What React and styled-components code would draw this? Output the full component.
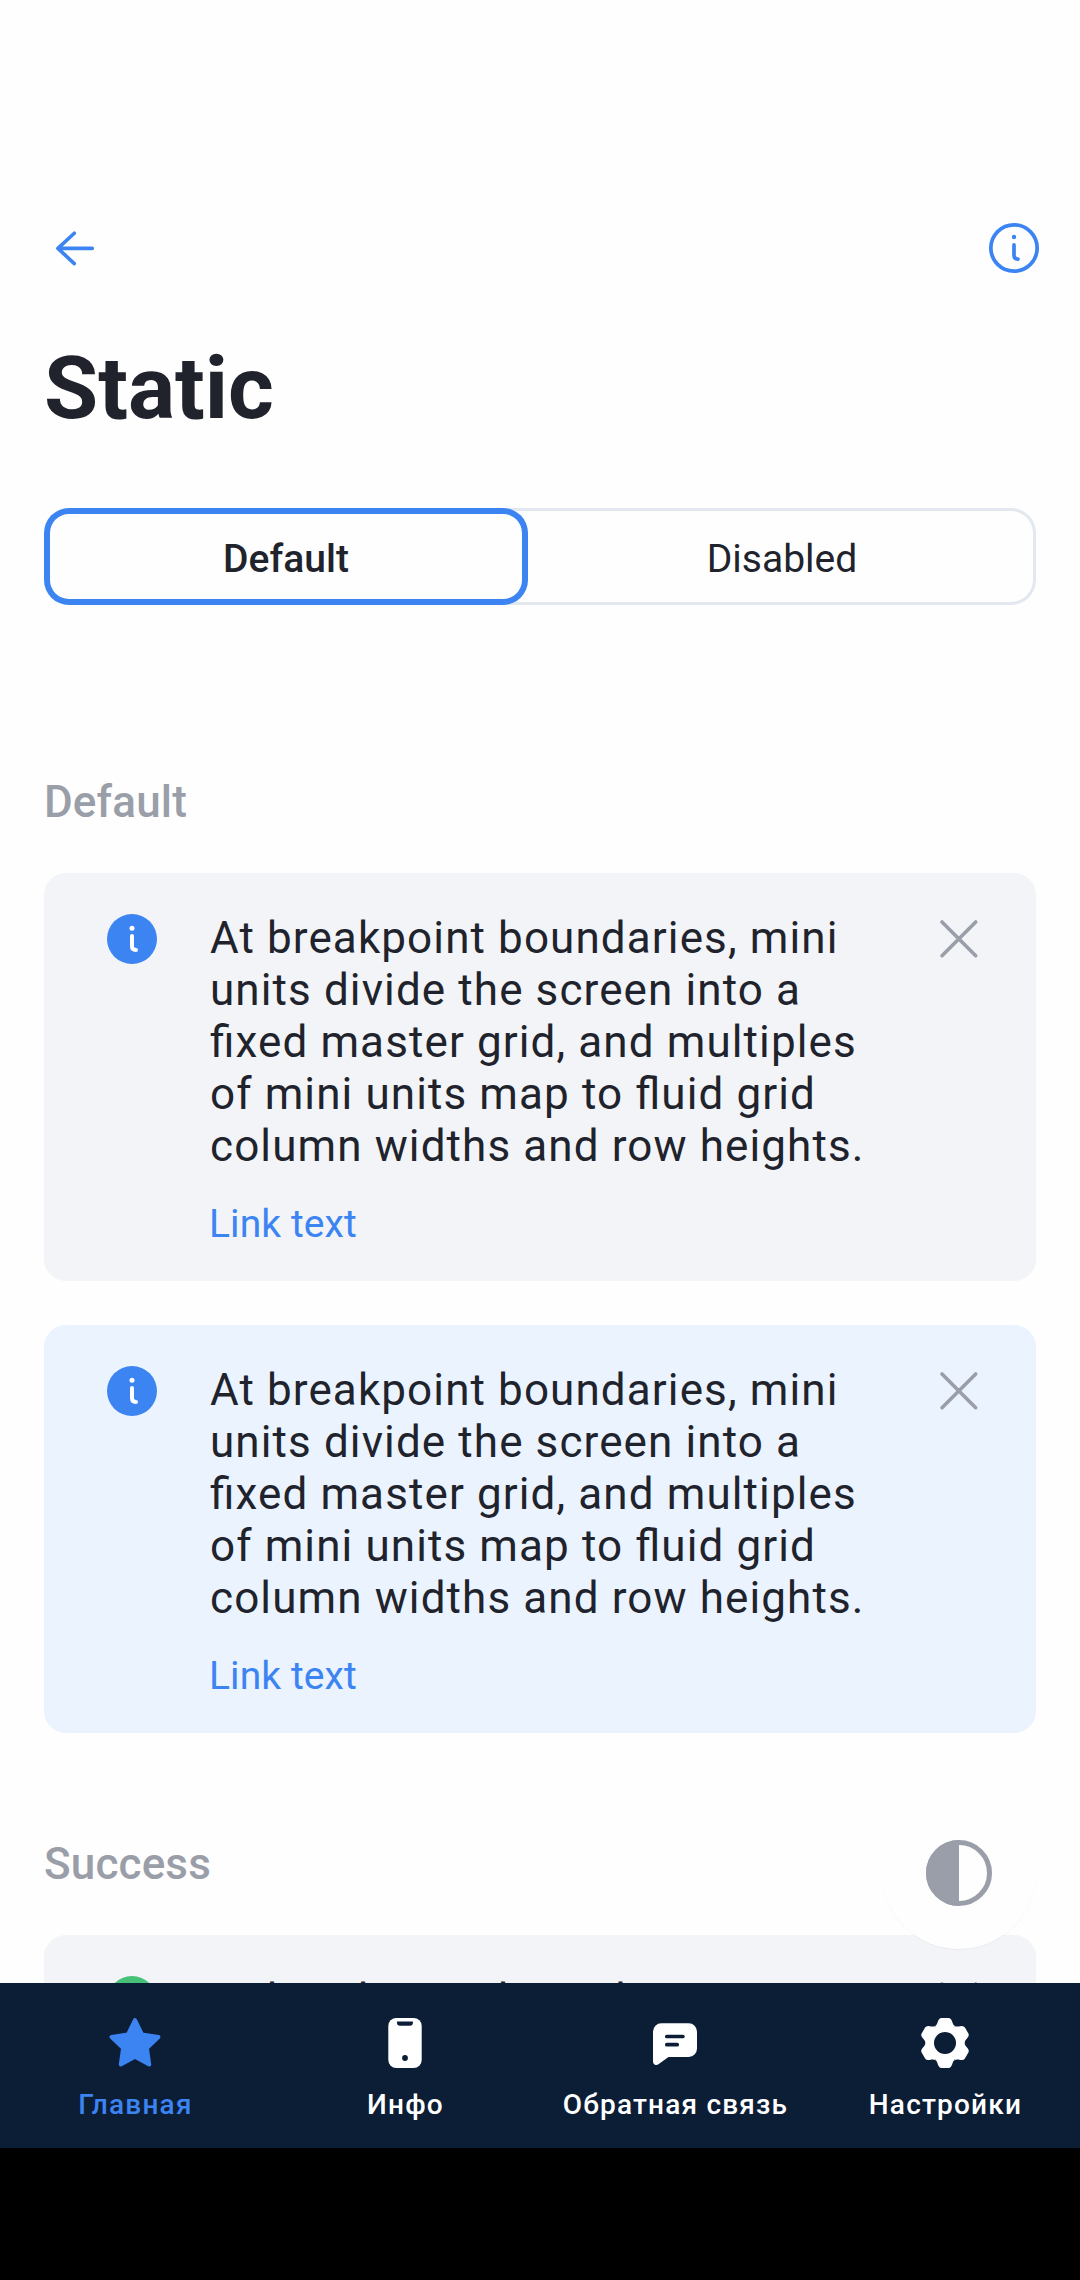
import React from "react";
import styled, { createGlobalStyle, css } from "styled-components";

const color = {
  page: "#fefefe",
  text: "#20232c",
  blue: "#3b84f2",
  gray: "#9a9ea9",
  line: "#e3e7ef",
  green: "#45c178",
  navy: "#0c1d36",
};

const Global = createGlobalStyle`
  * { box-sizing: border-box; }
  body { margin: 0; background: ${color.page}; font-family: Roboto, "Open Sans", sans-serif; color: ${color.text}; }
  button { font: inherit; color: inherit; background: none; border: 0; padding: 0; }
  h1, h2, p { margin: 0; }
  svg { display: block; }
`;

const Screen = styled.div`
  position: relative;
  display: flex;
  flex-direction: column;
  width: 1080px;
  height: 2280px;
  overflow: hidden;
  background: ${color.page};
`;

const Content = styled.main`
  display: flex;
  flex-direction: column;
  flex: 1;
  min-height: 0;
  overflow: hidden;
  padding: 0 44px;
`;

const TopBar = styled.header`
  display: flex;
  flex: none;
  justify-content: space-between;
  align-items: center;
  height: 66px;
  margin: 215px -11px 0 -2px;
`;

const IconButton = styled.button`
  width: 66px;
  height: 66px;
`;

const Title = styled.h1`
  flex: none;
  margin-top: 55px;
  font-size: 88px;
  line-height: 104px;
  font-weight: 700;
  height: 104px;
`;

const Segments = styled.div`
  flex: none;
  display: flex;
  height: 97px;
  margin-top: 68px;
  border-radius: 25px;
  box-shadow: inset 0 0 0 3px ${color.line};
`;

const Segment = styled.button`
  flex: ${(p) => (p.$active ? "0 0 484px" : "1")};
  padding-top: 4px;
  font-size: 39px;
  line-height: 46px;
  border-radius: 25px;
  font-weight: ${(p) => (p.$active ? 500 : 400)};
  ${(p) => p.$active && css`background: ${color.page}; box-shadow: inset 0 0 0 6px ${color.blue};`}
`;

const SectionTitle = styled.h2`
  flex: none;
  margin: ${(p) => p.$gap}px 0 1px;
  height: 52px;
  font-size: 44px;
  line-height: 52px;
  font-weight: 500;
  letter-spacing: 0.15px;
  color: ${color.gray};
`;

const Card = styled.article`
  flex: none;
  display: flex;
  height: 408px;
  margin-top: 44px;
  padding: 33px 44px 0 55px;
  border-radius: 22px;
  background: ${(p) => p.$bg};
`;

const StatusIcon = styled.div`
  width: 66px;
  height: 66px;
  margin-right: 45px;
`;

const CardBody = styled.div`
  display: flex;
  flex-direction: column;
  align-items: flex-start;
  flex: 1;
`;

const Message = styled.p`
  padding-top: 6px;
  font-size: 44px;
  line-height: 52px;
  letter-spacing: 1.11px;
  white-space: pre;
  font-feature-settings: "liga" 1;
`;

const Link = styled.a`
  margin: 29px 0 0 -1px;
  font-size: 39px;
  line-height: 46px;
  letter-spacing: 0.1px;
  color: ${color.blue};
`;

const ThemeButton = styled.button`
  position: absolute;
  left: 882px;
  top: 1795px;
  width: 154px;
  height: 154px;
  padding-top: 2px;
  display: grid;
  place-items: center;
  border-radius: 50%;
  background: ${color.page};
  box-shadow: 0 1px 1px rgba(0, 0, 0, 0.04);
`;

const TabBar = styled.nav`
  position: relative;
  flex: none;
  display: grid;
  grid-template-columns: repeat(4, 1fr);
  height: 165px;
  background: ${color.navy};
`;

const Tab = styled.button`
  display: flex;
  flex-direction: column;
  align-items: center;
  padding-top: 26px;
  gap: 13px;
  color: ${(p) => (p.$active ? color.blue : "#fff")};
`;

const TabLabel = styled.span`
  padding-left: 1px;
  font-size: 28px;
  line-height: 33px;
  font-weight: 500;
  letter-spacing: 1.2px;
  white-space: nowrap;
`;

const SystemBar = styled.div`
  flex: none;
  height: 132px;
  background: #000;
`;

const BackIcon = () => (
  <svg width="66" height="66" viewBox="0 0 66 66" fill="none" stroke={color.blue} strokeWidth="3.6" strokeLinecap="round" strokeLinejoin="round">
    <path d="M50.300 33.400H15.900M32.300 18.200L15.900 33.400L32.300 48.600" />
  </svg>
);

const InfoIcon = () => (
  <svg width="66" height="66" viewBox="0 0 66 66" fill="none" stroke={color.blue} strokeWidth="3.7" strokeLinecap="round">
    <circle cx="33" cy="33" r="23.150" />
    <circle cx="33" cy="22" r="2.200" fill={color.blue} stroke="none" />
    <path d="M33 29.800V40.500Q33 44 37 44.200" />
  </svg>
);

const InfoBadge = ({ fill }) => (
  <svg width="66" height="66" viewBox="0 0 66 66">
    <circle cx="33" cy="33" r="25" fill={fill} />
    <circle cx="33" cy="22.300" r="2.500" fill="#fff" />
    <path d="M33 30V40.300Q33 43.800 37 44" fill="none" stroke="#fff" strokeWidth="4" strokeLinecap="round" />
  </svg>
);

const CloseIcon = () => (
  <svg width="66" height="66" viewBox="0 0 66 66" fill="none" stroke={color.gray} strokeWidth="3.6" strokeLinecap="round">
    <path d="M16 16L49.700 49.700M49.700 16L16 49.700" />
  </svg>
);

const ContrastIcon = () => (
  <svg width="66" height="66" viewBox="0 0 66 66">
    <circle cx="33" cy="33" r="30.500" fill="none" stroke={color.gray} strokeWidth="5" />
    <path d="M33 0A33 33 0 0 0 33 66Z" fill={color.gray} />
  </svg>
);

const StarIcon = () => (
  <svg width="66" height="66" viewBox="0 0 66 66" fill={color.blue} stroke={color.blue} strokeWidth="4" strokeLinejoin="round">
    <path d="M33 11L40.100 25.600L56.400 28L44.900 39.100L47.200 55.500L33 47.800L18.800 55.500L21.100 39.100L9.600 28L25.900 25.600Z" />
  </svg>
);

const PhoneIcon = () => (
  <svg width="66" height="66" viewBox="0 0 66 66">
    <rect x="16.300" y="9" width="33.400" height="50" rx="8" fill="#fff" />
    <path d="M25 12.400H40.900V13.700Q40.900 16.700 37.900 16.700H28Q25 16.700 25 13.700Z" fill={color.navy} />
    <circle cx="33" cy="49" r="2.900" fill={color.navy} />
  </svg>
);

const ChatIcon = () => (
  <svg width="66" height="66" viewBox="0 0 66 66">
    <path d="M19.300 14.300H46.700A8.300 8.300 0 0 1 55 22.600V39.600A8.300 8.300 0 0 1 46.700 47.900H26.500L16.800 55.100Q14.800 56.500 12.900 55.700Q11 54.800 11 52.500V22.600A8.300 8.300 0 0 1 19.300 14.300Z" fill="#fff" />
    <path d="M24.800 27.500H40.900M24.800 35.700H35.200" fill="none" stroke={color.navy} strokeWidth="3.700" strokeLinecap="round" />
  </svg>
);

const GearIcon = () => (
  <svg width="66" height="66" viewBox="0 0 66 66">
    <g fill="#fff" transform="translate(33 34)">
      <circle r="18" />
      {[0, 60, 120, 180, 240, 300].map((a) => (
        <path key={a} transform={`rotate(${a})`} d="M-9.850 -17.060Q-8.200 -17.800 -7.600 -20Q-6.300 -25 -3.500 -25H3.500Q6.300 -25 7.600 -20Q8.200 -17.800 9.850 -17.060L0 0Z" />
      ))}
      <circle r="11" fill={color.navy} />
    </g>
  </svg>
);

const LINES = [
  "At breakpoint boundaries, mini",
  "units divide the screen into a",
  "fixed master grid, and multiples",
  "of mini units map to fluid grid",
  "column widths and row heights.",
];

function Notice({ bg, accent, lines = LINES, link }) {
  return (
    <Card $bg={bg}>
      <StatusIcon><InfoBadge fill={accent} /></StatusIcon>
      <CardBody>
        <Message>{lines.join("\n")}</Message>
        {link && <Link>{link}</Link>}
      </CardBody>
      <IconButton aria-label="Close"><CloseIcon /></IconButton>
    </Card>
  );
}

const TABS = [
  ["Главная", StarIcon],
  ["Инфо", PhoneIcon],
  ["Обратная связь", ChatIcon],
  ["Настройки", GearIcon],
];

export default function App() {
  return (
    <Screen>
      <Global />
      <Content>
        <TopBar>
          <IconButton aria-label="Back"><BackIcon /></IconButton>
          <IconButton aria-label="Info"><InfoIcon /></IconButton>
        </TopBar>
        <Title>Static</Title>
        <Segments>
          <Segment $active>Default</Segment>
          <Segment>Disabled</Segment>
        </Segments>
        <SectionTitle $gap={171}>Default</SectionTitle>
        <Notice bg="#f2f4f8" accent={color.blue} link="Link text" />
        <Notice bg="#ebf3ff" accent={color.blue} link="Link text" />
        <SectionTitle $gap={105}>Success</SectionTitle>
        <Notice bg="#f2f4f8" accent={color.green} lines={LINES.slice(0, 1)} />
      </Content>
      <ThemeButton aria-label="Theme"><ContrastIcon /></ThemeButton>
      <TabBar>
        {TABS.map(([label, Icon], i) => (
          <Tab key={label} $active={i === 0}>
            <Icon />
            <TabLabel>{label}</TabLabel>
          </Tab>
        ))}
      </TabBar>
      <SystemBar />
    </Screen>
  );
}
